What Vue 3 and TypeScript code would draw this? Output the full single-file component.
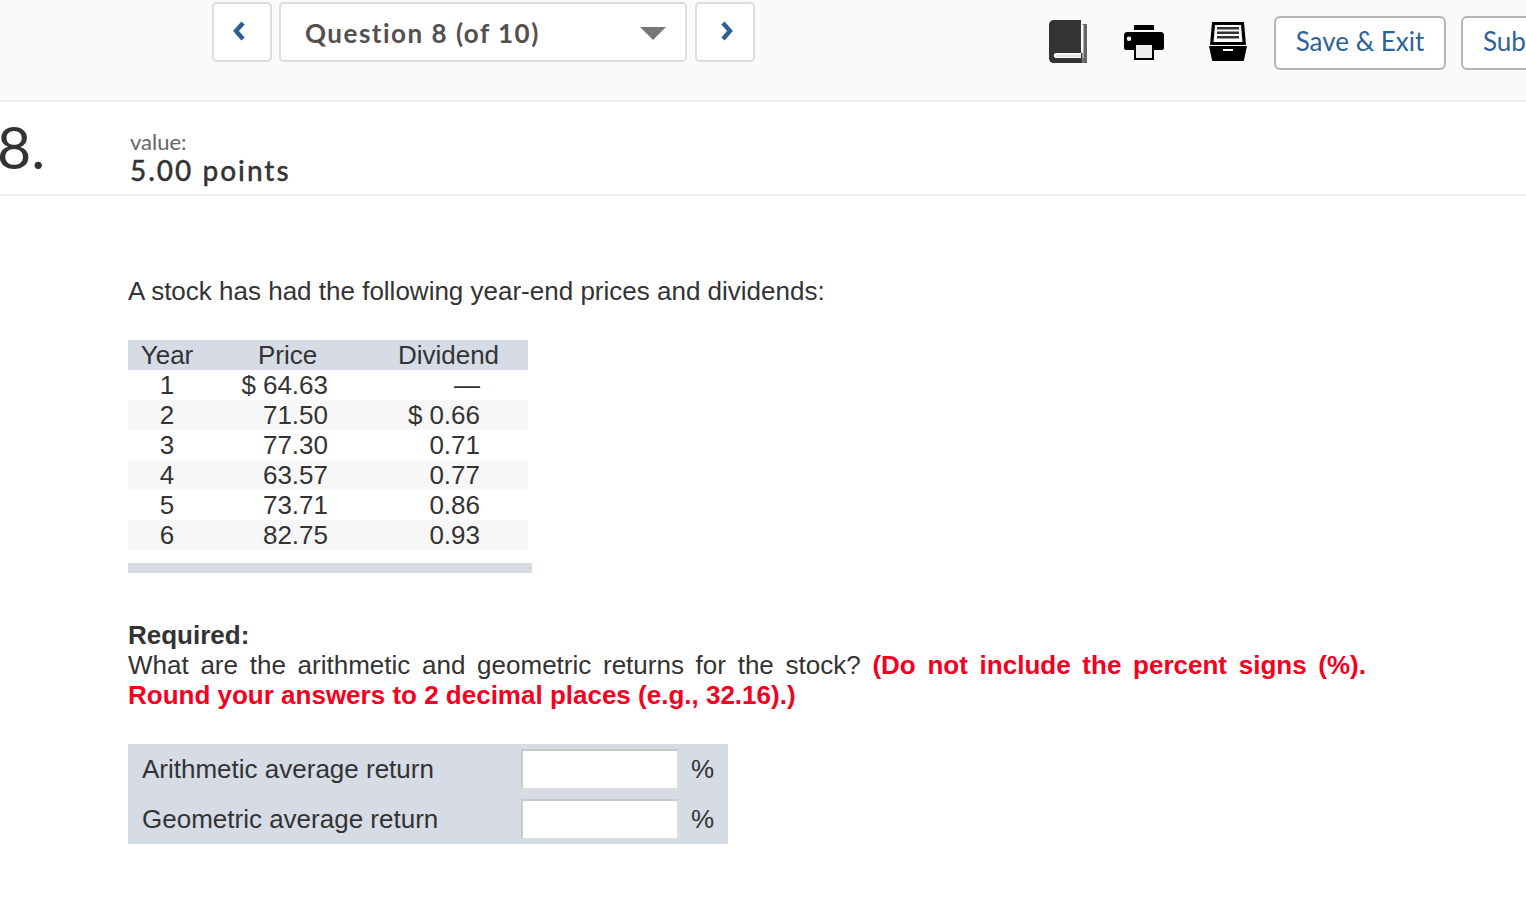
<template>
  <div class="page">
    <header class="toolbar">
      <nav class="question-nav">
        <button class="nav-btn prev" type="button">
          <svg width="16" height="22" viewBox="0 0 16 22"><polyline points="12,3 5,11 12,19" fill="none" stroke="#2d5f94" stroke-width="4.400" /></svg>
        </button>
        <div class="question-select">
          <span>Question 8 (of 10)</span>
          <span class="caret"></span>
        </div>
        <button class="nav-btn next" type="button">
          <svg width="16" height="22" viewBox="0 0 16 22"><polyline points="4,3 11,11 4,19" fill="none" stroke="#2d5f94" stroke-width="4.400" /></svg>
        </button>
      </nav>

      <div class="tools">
        <svg class="book" width="38" height="43" viewBox="0 0 38 43">
          <path d="M5 0H32V33H7C4 33 4 38 7 38H32V33H33.500V43H5C2 43 0 41 0 38V5C0 2 2 0 5 0Z" fill="#333" />
          <path d="M33.500 4H38V43H33.500V38H34.500V5H33.500Z" fill="#666" />
          <path d="M7 35H32V37H7Z" fill="#e4e4e4" />
        </svg>
        <svg class="printer" width="40" height="35" viewBox="0 0 40 35">
          <path d="M10 0H30V5H10Z" fill="#000" />
          <path fill-rule="evenodd" d="M3 7H37C39 7 40 8.500 40 10V23C40 24.500 39 25 37 25H30V35H10V25H3C1 25 0 24.500 0 23V10C0 8.500 1 7 3 7ZM5 11.500A2.200 2.200 0 1 0 5 16A2.200 2.200 0 1 0 5 11.500ZM12 20V33H28V20Z" fill="#000" />
          <path d="M12 20H28V33H12Z" fill="#eee" />
        </svg>
        <svg class="archive" width="38" height="39" viewBox="0 0 38 39">
          <path fill-rule="evenodd" d="M3 0H35L37 23H1ZM6 3L4.500 20H33.500L32 3Z" fill="#000" />
          <path d="M8 5H30V7.500H8ZM8 9.500H30V12H8ZM8 14H30V16.500H8Z" fill="#333" />
          <path fill-rule="evenodd" d="M0 24H38L35 38C35 38.500 34.500 39 34 39H4C3.500 39 3 38.500 3 38ZM14 27V29H24V27Z" fill="#000" />
        </svg>
        <button class="action-btn" type="button">Save &amp; Exit</button>
        <button class="action-btn" type="button">Submit</button>
      </div>
    </header>

    <section class="question-head">
      <div class="number">8.</div>
      <div class="value">
        <div class="value-label">value:</div>
        <div class="value-points">5.00 points</div>
      </div>
    </section>

    <main class="question-body">
      <p class="intro">A stock has had the following year-end prices and dividends:</p>

      <table class="prices">
        <thead>
          <tr>
            <th class="c-year">Year</th>
            <th class="c-price">Price</th>
            <th class="c-div">Dividend</th>
          </tr>
        </thead>
        <tbody>
          <tr v-for="row in rows" :key="row.year">
            <td class="c-year">{{ row.year }}</td>
            <td class="c-price"><span v-if="row.priceSign" class="sign">$</span>{{ row.price }}</td>
            <td class="c-div"><span v-if="row.divSign" class="sign">$</span>{{ row.dividend }}</td>
          </tr>
        </tbody>
      </table>
      <div class="table-foot"></div>

      <div class="required">
        <strong>Required:</strong>
        <p>What are the arithmetic and geometric returns for the stock? <b class="warn">(Do not include the percent signs (%). Round your answers to 2 decimal places (e.g., 32.16).)</b></p>
      </div>

      <div class="answers">
        <div v-for="label in answers" :key="label" class="answer-row">
          <label>{{ label }}</label>
          <input type="text" />
          <span class="unit">%</span>
        </div>
      </div>
    </main>
  </div>
</template>

<script setup lang="ts">
interface PriceRow {
  year: number
  price: string
  dividend: string
  priceSign?: boolean
  divSign?: boolean
}

const rows: PriceRow[] = [
  { year: 1, price: '64.63', dividend: '—', priceSign: true },
  { year: 2, price: '71.50', dividend: '0.66', divSign: true },
  { year: 3, price: '77.30', dividend: '0.71' },
  { year: 4, price: '63.57', dividend: '0.77' },
  { year: 5, price: '73.71', dividend: '0.86' },
  { year: 6, price: '82.75', dividend: '0.93' }
]

const answers = ['Arithmetic average return', 'Geometric average return']
</script>

<style>
html,
body {
  overflow: hidden;
  background: #fff;
}
</style>

<style scoped>
.page {
  width: 1526px;
  height: 898px;
  overflow: hidden;
  font-family: "Liberation Sans", Arial, sans-serif;
  color: #333;
}

.toolbar {
  display: flex;
  justify-content: space-between;
  height: 98px;
  padding: 2px 0 0 212px;
  background: #fafafa;
  border-bottom: 2px solid #eeeeee;
}

.question-nav {
  display: flex;
  align-items: flex-start;
  gap: 7px;
}

.nav-btn {
  display: flex;
  align-items: center;
  justify-content: center;
  width: 60px;
  height: 60px;
  padding: 0 0 2px;
  background: #fff;
  border: 2px solid #dddddd;
  border-radius: 5px;
}

.nav-btn.prev {
  padding-right: 6px;
}

.nav-btn.next {
  margin-left: 1px;
  padding-left: 3px;
}

.question-select {
  display: flex;
  align-items: center;
  justify-content: space-between;
  box-sizing: border-box;
  width: 408px;
  height: 60px;
  padding: 2px 19px 0 24px;
  background: #fff;
  border: 2px solid #dddddd;
  border-radius: 5px;
  font-family: Lato, sans-serif;
  font-size: 26px;
  font-weight: 700;
  letter-spacing: 1.5px;
  color: #55504d;
}

.caret {
  width: 0;
  height: 0;
  border-left: 13px solid transparent;
  border-right: 13px solid transparent;
  border-top: 13px solid #777;
}

.tools {
  display: flex;
  align-items: flex-start;
  width: 477px;
  flex: none;
  overflow: hidden;
}

.book {
  flex: none;
  margin-top: 18px;
}

.printer {
  flex: none;
  margin: 23px 0 0 37px;
}

.archive {
  flex: none;
  margin: 20px 0 0 45px;
}

.action-btn {
  flex: none;
  height: 54px;
  margin-top: 14px;
  padding-bottom: 6px;
  background: #fff;
  border: 2px solid #b5b5b5;
  border-radius: 6px;
  font-family: Lato, sans-serif;
  font-size: 26px;
  color: #2d6399;
}

.action-btn:nth-of-type(1) {
  width: 172px;
  margin-left: 27px;
}

.action-btn:nth-of-type(2) {
  width: 150px;
  margin-left: 15px;
  padding-left: 20px;
  text-align: left;
}

.question-head {
  display: flex;
  height: 92px;
  border-bottom: 2px solid #eeeeee;
}

.number {
  width: 130px;
  margin-left: -3px;
  margin-right: 3px;
  padding-top: 10px;
  font-family: Lato, sans-serif;
  font-size: 59px;
  font-weight: 400;
  line-height: 70px;
  letter-spacing: 0;
}

.value {
  padding-top: 26px;
}

.value-label {
  font-family: Lato, sans-serif;
  font-size: 22px;
  line-height: 28px;
  color: #666;
}

.value-points {
  font-family: Lato, sans-serif;
  font-size: 28px;
  font-weight: 500;
  line-height: 28px;
  letter-spacing: 2px;
  -webkit-text-stroke: 0.3px #333;
}

.question-body {
  padding: 80px 0 0 128px;
  font-size: 26px;
  line-height: 30px;
}

.intro {
  margin: 0 0 34px;
}

.prices {
  width: 400px;
  table-layout: fixed;
  border-collapse: collapse;
}

.prices th {
  height: 30px;
  padding: 0;
  background: #d7dbe6;
  font-weight: 400;
}

.prices td {
  height: 30px;
  padding: 0;
}

.prices tbody tr:nth-child(even) {
  background: #f7f7f7;
}

.c-year {
  width: 78px;
  text-align: center;
}

.c-price {
  width: 163px;
}

.c-div {
  width: 159px;
}

.prices td.c-price {
  padding-right: 41px;
  text-align: right;
}

.prices td.c-div {
  padding-right: 48px;
  text-align: right;
}

.sign {
  margin-right: 7px;
}

.table-foot {
  width: 404px;
  height: 10px;
  margin: 13px 0 47px;
  background: #d7dbe6;
}

.required {
  width: 1238px;
  margin-bottom: 34px;
}

.required strong {
  display: block;
}

.required p {
  margin: 0;
  text-align: justify;
}

.warn {
  color: #f5001e;
}

.answers {
  width: 600px;
  background: #d7dbe6;
}

.answer-row {
  display: flex;
  align-items: center;
  height: 50px;
  padding-left: 14px;
}

.answer-row label {
  width: 380px;
}

.answer-row input {
  box-sizing: border-box;
  width: 158px;
  height: 41px;
  margin-left: -1px;
  padding: 0;
  background: #fff;
  border: 2px solid #ddd;
  border-top-color: #c8c8c8;
  border-left-color: #ccc;
  border-radius: 0;
}

.unit {
  margin-left: 12px;
}
</style>
